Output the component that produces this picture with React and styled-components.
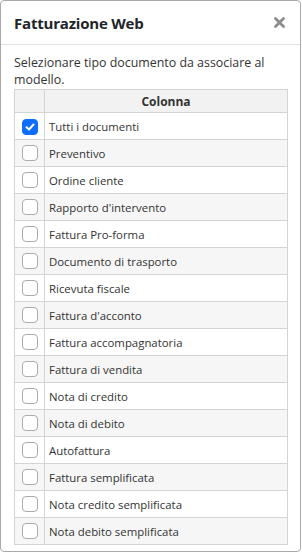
import { useState } from "react";
import styled, { createGlobalStyle } from "styled-components";

const GlobalStyle = createGlobalStyle`
  html, body {
    margin: 0;
    padding: 0;
    background: #ffffff;
  }
  body {
    font-family: "Open Sans", "Noto Sans", "Liberation Sans", sans-serif;
    color: #212529;
  }
`;

// finestra modale
const Modal = styled.div`
  box-sizing: border-box;
  width: 301px;
  height: 552px;
  border: 1px solid #a9a9a9;
  border-radius: 4px;
  background: #ffffff;
  display: flex;
  flex-direction: column;
`;

const Header = styled.div`
  height: 43px;
  padding: 0 13px;
  border-bottom: 1px solid #e2e2e2;
  display: flex;
  align-items: center;
  justify-content: space-between;
`;

const Title = styled.h1`
  margin: 0;
  font-size: 15px;
  font-weight: 700;
  color: #212529;
  letter-spacing: -0.2px;
`;

const CloseButton = styled.button`
  border: none;
  background: none;
  padding: 0;
  width: 11px;
  height: 11px;
  margin-right: 2px;
  cursor: pointer;
  display: flex;
`;

const Body = styled.div`
  padding: 9px 13px 0 13px;
`;

const Intro = styled.p`
  margin: 0 0 1px 0;
  font-size: 12.4px;
  line-height: 17px;
  color: #333333;
`;

const Table = styled.table`
  width: 274px;
  border-collapse: collapse;
  font-size: 11.4px;
  color: #333333;
`;

const HeadCell = styled.th`
  height: 22px;
  padding: 0;
  background: #f2f2f2;
  border: 1px solid #d4d4d4;
  font-weight: 700;
  font-size: 12px;
  text-align: center;
  width: ${(p) => (p.$narrow ? "29px" : "auto")};
`;

const Row = styled.tr`
  background: ${(p) => (p.$odd ? "#f6f6f6" : "#ffffff")};
`;

const Cell = styled.td`
  height: 26px;
  padding: 0 0 0 4px;
  border: 1px solid #d4d4d4;
  white-space: nowrap;
`;

const BoxCell = styled.td`
  height: 26px;
  padding: 0;
  border: 1px solid #d4d4d4;
  text-align: center;
  vertical-align: middle;
`;

const Check = styled.span`
  box-sizing: border-box;
  display: inline-flex;
  align-items: center;
  justify-content: center;
  width: 16px;
  height: 16px;
  margin-top: 2px;
  border-radius: 4px;
  border: 1px solid ${(p) => (p.$on ? "#0d6efd" : "#ababab")};
  background: ${(p) => (p.$on ? "#0d6efd" : "#ffffff")};
  cursor: pointer;
`;

const documenti = [
  "Tutti i documenti",
  "Preventivo",
  "Ordine cliente",
  "Rapporto d'intervento",
  "Fattura Pro-forma",
  "Documento di trasporto",
  "Ricevuta fiscale",
  "Fattura d'acconto",
  "Fattura accompagnatoria",
  "Fattura di vendita",
  "Nota di credito",
  "Nota di debito",
  "Autofattura",
  "Fattura semplificata",
  "Nota credito semplificata",
  "Nota debito semplificata",
];

const App = () => {
  const [scelti, setScelti] = useState([0]);

  const toggle = (i) =>
    setScelti((s) => (s.includes(i) ? s.filter((x) => x !== i) : [...s, i]));

  return (
    <>
      <GlobalStyle />
      <Modal>
        <Header>
          <Title>Fatturazione Web</Title>
          <CloseButton aria-label="Chiudi">
            <svg width="11" height="11" viewBox="0 0 11 11">
              <path d="M1.5 1.5 L9.5 9.5 M9.5 1.5 L1.5 9.5" stroke="#8c8c8c" strokeWidth="2.8" strokeLinecap="round" />
            </svg>
          </CloseButton>
        </Header>
        <Body>
          <Intro>Selezionare tipo documento da associare al modello.</Intro>
          <Table>
            <thead>
              <tr>
                <HeadCell $narrow></HeadCell>
                <HeadCell>Colonna</HeadCell>
              </tr>
            </thead>
            <tbody>
              {documenti.map((d, i) => (
                <Row key={d} $odd={i % 2 === 1}>
                  <BoxCell>
                    <Check $on={scelti.includes(i)} onClick={() => toggle(i)}>
                      {scelti.includes(i) && (
                        <svg width="10" height="10" viewBox="0 0 10 10">
                          <path d="M1.5 5.2 L4 7.5 L8.5 2.5" stroke="#ffffff" strokeWidth="2" fill="none" strokeLinecap="round" strokeLinejoin="round" />
                        </svg>
                      )}
                    </Check>
                  </BoxCell>
                  <Cell>{d}</Cell>
                </Row>
              ))}
            </tbody>
          </Table>
        </Body>
      </Modal>
    </>
  );
};

export default App;
